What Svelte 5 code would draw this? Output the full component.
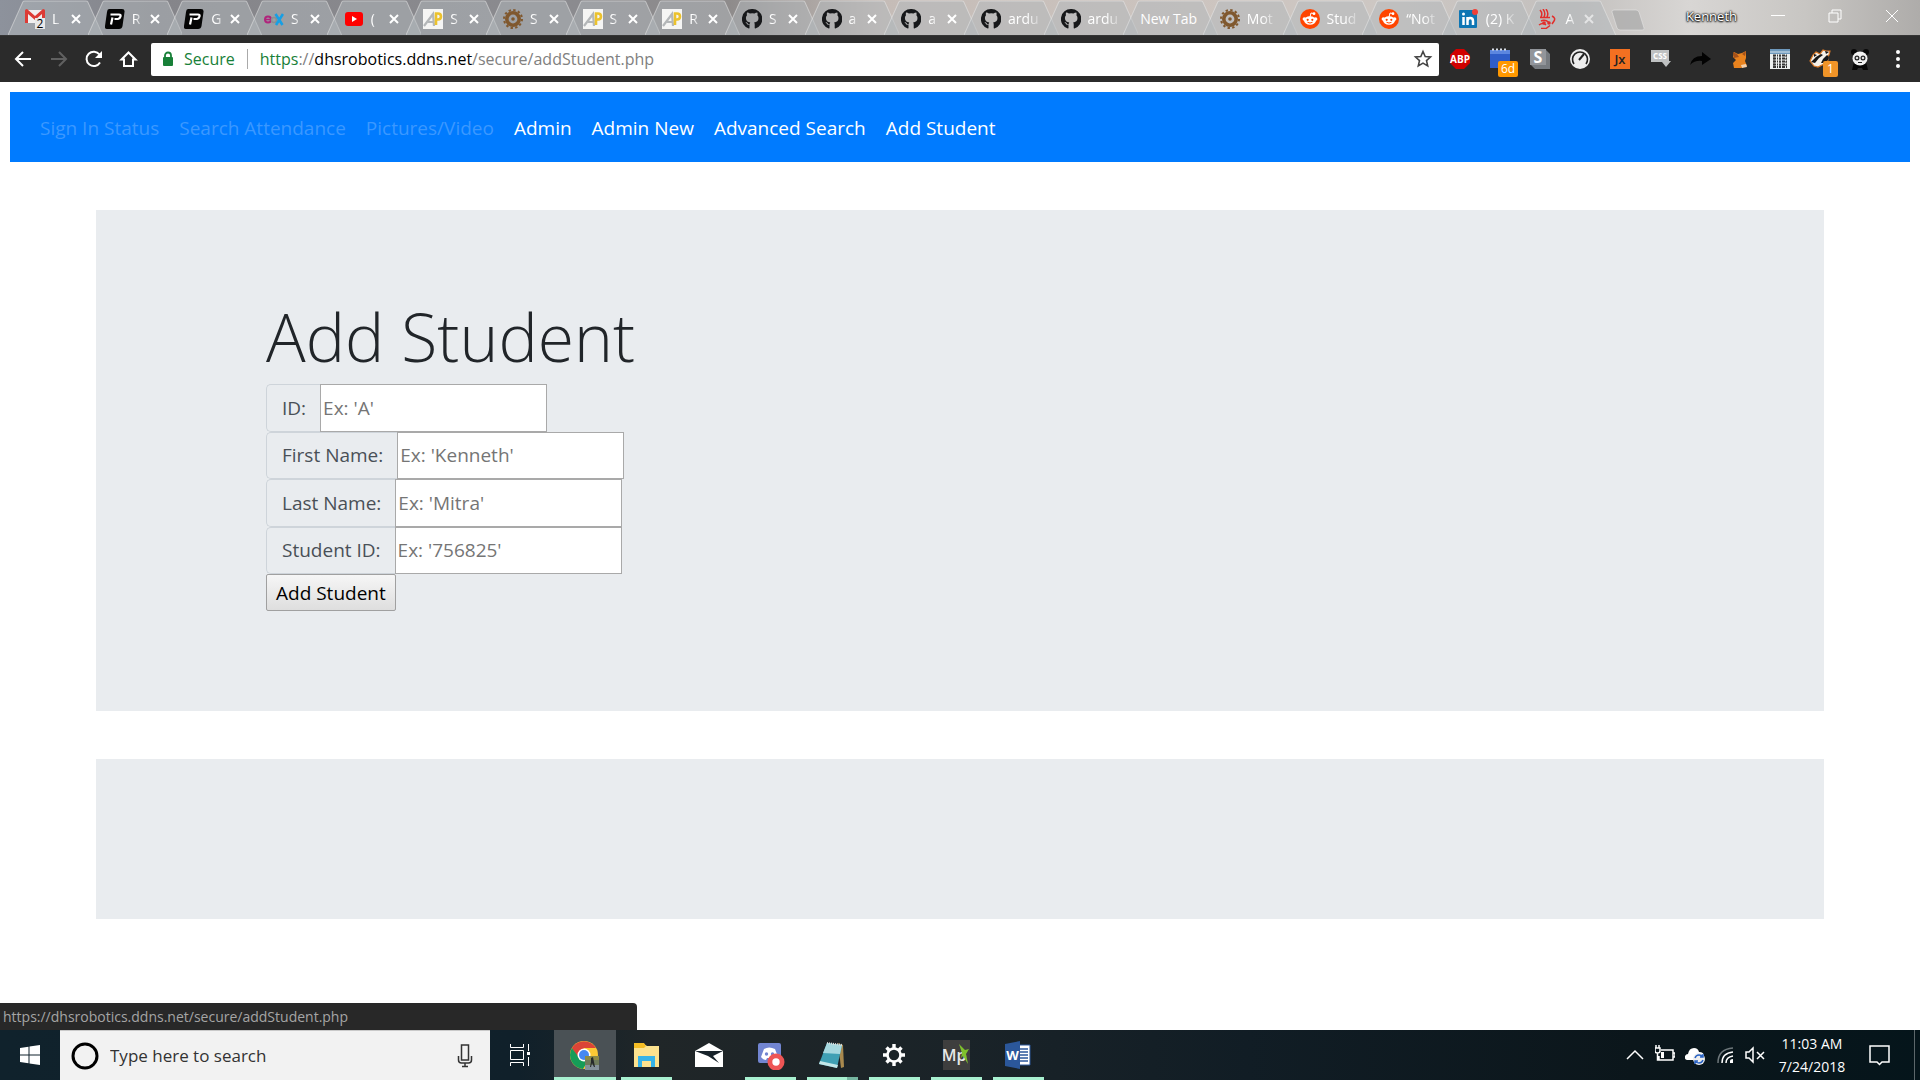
<script>
  const tabs = [
    { icon: 'gmail', title: 'L', close: true },
    { icon: 'p', title: 'R', close: true },
    { icon: 'p', title: 'G', close: true },
    { icon: 'edx', title: 'S', close: true },
    { icon: 'youtube', title: '(', close: true },
    { icon: 'ap', title: 'S', close: true },
    { icon: 'gear', title: 'S', close: true },
    { icon: 'ap', title: 'S', close: true },
    { icon: 'ap', title: 'R', close: true },
    { icon: 'github', title: 'S', close: true },
    { icon: 'github', title: 'a', close: true },
    { icon: 'github', title: 'a', close: true },
    { icon: 'github', title: 'ardu' },
    { icon: 'github', title: 'ardu' },
    { icon: '', title: 'New Tab' },
    { icon: 'gear', title: 'Mot' },
    { icon: 'reddit', title: 'Stud' },
    { icon: 'reddit', title: '“Not' },
    { icon: 'linkedin', title: '(2) K' },
    { icon: 'viking', title: 'A', close: true, current: true }
  ];

  const extensions = ['abp', 'calendar', 's', 'gauge', 'jx', 'css', 'arrow', 'fox', 'qr', 'badger', 'panda'];

  const links = [
    { label: 'Sign In Status', muted: true },
    { label: 'Search Attendance', muted: true },
    { label: 'Pictures/Video', muted: true },
    { label: 'Admin' },
    { label: 'Admin New' },
    { label: 'Advanced Search' },
    { label: 'Add Student' }
  ];

  const fields = [
    { id: 'id', label: 'ID:', hint: "Ex: 'A'" },
    { id: 'first', label: 'First Name:', hint: "Ex: 'Kenneth'" },
    { id: 'last', label: 'Last Name:', hint: "Ex: 'Mitra'" },
    { id: 'student', label: 'Student ID:', hint: "Ex: '756825'" }
  ];

  const apps = ['chrome', 'explorer', 'mail', 'discord', 'notepad', 'settings', 'mp', 'word'];
</script>

{#snippet cog(color)}
  <circle cx="10" cy="10" r="6.2" fill="none" stroke={color} stroke-width="3.6" />
  <circle cx="10" cy="10" r="9" fill="none" stroke={color} stroke-width="2" stroke-dasharray="2.4 2.31" />
  <circle cx="10" cy="10" r="1.8" fill={color} />
{/snippet}

{#snippet favicon(name)}
  <svg class="favicon" viewBox="0 0 20 20" aria-hidden="true">
    {#if name === 'gmail'}
      <path d="M1 1h18v13H1z" fill="#f1efef" />
      <path d="M0 14V1.500Q0 0 2 0l8 7 8-7q2 0 2 1.500V14h-3V5l-7 6-7-6v9z" fill="#dd3b35" />
      <rect x="10" y="9" width="10" height="11" fill="#e8e8e8" />
      <text x="15" y="19" text-anchor="middle" font-size="12" fill="#000">2</text>
    {:else if name === 'p'}
      <path d="M4 0h13q3 0 2.500 3l-2 14q-.5 3-3.500 3H2q-2.500 0-2-3L2 3q.3-3 2-3z" fill="#050505" />
      <path d="M5.500 5.500H14q2 0 1.500 2T13 10H9.500M7.500 8.500 6 15.500" fill="none" stroke="#fff" stroke-width="2.2" />
    {:else if name === 'edx'}
      <circle cx="4" cy="10.500" r="3" fill="none" stroke="#b0247c" stroke-width="2" />
      <path d="M1 10.500h6" stroke="#b0247c" stroke-width="1.500" />
      <circle cx="10" cy="11" r="2.500" fill="none" stroke="#8a8e91" stroke-width="1.500" />
      <path d="m11.500 5 7 11M19 5l-7 11" stroke="#169fe5" stroke-width="2.600" />
    {:else if name === 'youtube'}
      <rect x="1" y="3" width="18" height="14" rx="3" fill="#f00" />
      <path d="m8 7 5 3-5 3z" fill="#fff" />
    {:else if name === 'ap'}
      <path d="M0 0h20v20H0z" fill="#f5f5f4" />
      <path d="m1 17 9-12 1 12M5 13h5" fill="none" stroke="#b4b7b9" stroke-width="2.200" />
      <path d="M13 16V4.500h2q3 0 3 3t-3 3h-2" fill="none" stroke="#ecc22d" stroke-width="2.600" />
    {:else if name === 'gear'}
      {@render cog('#80582e')}
    {:else if name === 'github'}
      <path d="M10 0a10 10 0 0 0-3.200 19.500c.5.1.7-.2.7-.5v-3.400c-.9.4-2 .2-2.500-.7-.5-.9-1-1.200-1.500-1.500 1.300-.3 1.800.5 2.500 1.300.5.700 1.200.5 1.700.2.100-.6.300-1 .6-1.300-2.700-.5-4.400-1.700-4.400-4.600 0-1.100.4-2 1.100-2.800-.3-1-.2-1.900.1-2.700 1 0 1.900.5 2.800 1.100a10 10 0 0 1 4.600 0C13.500 4 14.300 3.500 15.300 3.500c.3.800.4 1.700.1 2.700.7.800 1.100 1.700 1.100 2.800 0 2.900-1.700 4.200-4.400 4.600.4.400.6 1 .6 1.800V19c0 .3.200.6.700.5A10 10 0 0 0 10 0z" fill="#17181a" />
    {:else if name === 'reddit'}
      <circle cx="10" cy="10" r="10" fill="#ff4500" />
      <path d="m10 8 1-4 3 .6" fill="none" stroke="#fff" />
      <circle cx="14" cy="4.700" r="1.400" fill="#fff" />
      <circle cx="4.300" cy="10" r="1.700" fill="#fff" />
      <circle cx="15.700" cy="10" r="1.700" fill="#fff" />
      <ellipse cx="10" cy="11.500" rx="6" ry="4.200" fill="#fff" />
      <circle cx="7.700" cy="10.800" r="1.100" fill="#ff4500" />
      <circle cx="12.300" cy="10.800" r="1.100" fill="#ff4500" />
      <path d="M7.500 13.300q2.500 1.500 5 0" fill="none" stroke="#ff4500" />
    {:else if name === 'linkedin'}
      <rect y="1" width="18" height="18" rx="1" fill="#0e76b4" />
      <path d="M4.500 8v8M8.500 16V8M8.500 12q0-3 2.700-3t2.800 3v4" fill="none" stroke="#fff" stroke-width="2.500" />
      <circle cx="4.500" cy="5" r="1.500" fill="#fff" />
      <circle cx="16" cy="3" r="3" fill="#ef4038" />
    {:else if name === 'viking'}
      <path d="M2 1q3 3 1 7M5 0q3 4 1 8M8 0q3 4 1 8M2 8.500h10M14 7q4 2 2 5l-2 3M3 12q4-2 8 1.500M1 16q4-3 7 0M3 19.500h5l4-3" fill="none" stroke="#e22e2b" stroke-width="1.500" />
      <circle cx="6" cy="14" r="1.800" fill="#e22e2b" />
      <circle cx="11" cy="14" r="1.800" fill="#e22e2b" />
    {/if}
  </svg>
{/snippet}

{#snippet extension(name)}
  <svg class="ext-icon" viewBox="0 0 28 28" aria-hidden="true">
    {#if name === 'abp'}
      <path d="M10 4h8l6 6v8l-6 6h-8l-6-6v-8z" fill="#d00000" />
      <text x="14" y="18" text-anchor="middle" font-size="10" font-weight="700" fill="#fff">ABP</text>
    {:else if name === 'calendar'}
      <path d="M4 5h20v18H4z" fill="#2f5dc8" />
      <path d="M4 5h20v4H4z" fill="#5c86df" />
      <path d="M6 4.500h16" stroke="#d8dee8" stroke-width="2" stroke-dasharray="2 2" />
    {:else if name === 's'}
      <path d="m4 4 16 1 4 4v15H9l-5-5z" fill="#777b80" />
      <path d="M4 4h16v16H4z" fill="#92959a" />
      <text x="12" y="18" text-anchor="middle" font-size="16" font-weight="700" fill="#fff">S</text>
    {:else if name === 'gauge'}
      <circle cx="14" cy="14" r="10" fill="#eee" />
      <path d="M8 19a7.500 7.500 0 1 1 12 0" fill="none" stroke="#222" stroke-width="1.600" />
      <path d="m13 15 5-6" stroke="#222" stroke-width="2" />
    {:else if name === 'jx'}
      <path d="M4 4h20v20H4z" fill="#f37021" />
      <text x="14" y="19" text-anchor="middle" font-size="13" font-weight="600" fill="#222">Jx</text>
    {:else if name === 'css'}
      <path d="M5 5h18v11h2l-5 6-4-5H5z" fill="#bfc1c2" />
      <text x="14" y="14" text-anchor="middle" font-size="8" font-weight="700" fill="#fff">CSS</text>
    {:else if name === 'arrow'}
      <path d="M4 20q2-9 12-9V7l9 7-9 6v-4q-7-1-12 4z" fill="#030303" />
    {:else if name === 'fox'}
      <path d="m8 7 4 2 4-1 4-2v7l-1 3 2 5-6 2H8l-1-5 3-3-3-3z" fill="#e8821e" />
      <path d="m7 7 4 2 2 3-5 1zM20 6l-4 3 3 2z" fill="#a5511a" />
      <path d="m15 20 5-1 1 3-5 1z" fill="#f4cfab" />
    {:else if name === 'qr'}
      <path d="M4 4h20v20H4z" fill="#ecefef" />
      <path d="M4 4h20v5H4z" fill="#6e99bd" />
      <path d="M4 7h20" stroke="#d8e5ed" />
      <path d="M7 10.500h14M7 13.500h14M7 16.500h14M7 19.500h14M7 22h14" stroke="#333" stroke-width="2" stroke-dasharray="3 1 1 1 2 1" />
      <path d="M8 11v11M14 10v12M20 10v12" stroke="#444" stroke-dasharray="2 1" />
    {:else if name === 'badger'}
      <path d="m4 16 3-6 3-3 4 2 3-4 3 1h4l-1 4-2 2 1 3-4 4-6 3-4-1z" fill="#f4f0e9" stroke="#d97826" stroke-width="1.200" />
      <path d="m5 17 5-5 5-3 2 1-4 3-4 5zM15 18l2-4 4-4 1 1v4l-4 3zM8 9l3 1-3 2zM19 6l4 1-3 2z" fill="#161616" />
    {:else if name === 'panda'}
      <path d="M8 17h12l2 8h-5l-1-2h-4l-1 2H6z" fill="#080808" />
      <circle cx="8" cy="7" r="3" fill="#080808" />
      <circle cx="20" cy="7" r="3" fill="#080808" />
      <ellipse cx="14" cy="13.500" rx="7.500" ry="7" fill="#f3f3f3" />
      <circle cx="11" cy="13" r="1.900" fill="#ddd" stroke="#222" stroke-width="1.200" />
      <circle cx="17" cy="13" r="1.900" fill="#ddd" stroke="#222" stroke-width="1.200" />
      <path d="M12 17.500h4" stroke="#222" />
    {/if}
  </svg>
{/snippet}

{#snippet appIcon(name)}
  <svg class="app-icon" viewBox="0 0 30 30" aria-hidden="true">
    {#if name === 'chrome'}
      <circle cx="14" cy="15" r="14" fill="#fcc934" />
      <path d="M1.900 8A14 14 0 0 1 26 8H14l-6 10z" fill="#dc4437" />
      <path d="M1.900 8A14 14 0 0 0 13 29l6-10-9 0z" fill="#169c58" />
      <circle cx="14" cy="15" r="6.500" fill="#fff" />
      <circle cx="14" cy="15" r="5" fill="#4688f1" />
      <path d="M15 16h14v14H15z" fill="#6f7b5c" />
      <path d="M15 16h14v4H15z" fill="#8d8a45" />
      <path d="M15 25h14v5H15z" fill="#84919a" />
      <path d="m21 18 2-1 1 5 1 5h-1l-2-4-1 4h-1l1-5z" fill="#25282b" />
    {:else if name === 'explorer'}
      <path d="M2 4h10l3 2h12v21H2z" fill="#fce28e" />
      <path d="M2 3h10l2 3-2 2H2z" fill="#f5bd24" />
      <path d="M6 27V16h17v11h-4v-6h-9v6z" fill="#36b3e8" />
    {:else if name === 'mail'}
      <path d="M1 11 15 3l14 8v16H1z" fill="#fff" />
      <path d="M1 11h28L19 16l6 7-11-7z" fill="#17222a" />
    {:else if name === 'discord'}
      <path d="M4 3h19q2 0 2 2v20l-4-2H4q-2 0-2-2V5q0-2 2-2z" fill="#7285d1" />
      <path d="M8 9q5-3 11 0l3 8q-2 3-5 3l-1-2h-5l-1 2q-3 0-5-3z" fill="#fff" />
      <circle cx="10.500" cy="14" r="1.700" fill="#7285d1" />
      <circle cx="16.500" cy="14" r="1.700" fill="#7285d1" />
      <circle cx="20" cy="22" r="8.500" fill="#ee5555" />
      <circle cx="20" cy="22" r="3.700" fill="#fff" />
    {:else if name === 'notepad'}
      <path d="M20 3 25 5l1 22-3 1z" fill="#a8894e" />
      <path d="m9 3 15 2-5 23L1 24z" fill="#3fa0b4" />
      <path d="m9 3 15 2-2 9-17-1z" fill="#a6d8df" />
      <path d="m1 24 18 4 1-3L2 21z" fill="#c3e7e9" />
      <path d="m9 3 15 2" stroke="#ddd" stroke-width="2" stroke-dasharray="1 1" />
    {:else if name === 'settings'}
      <circle cx="14" cy="15" r="6.500" fill="none" stroke="#fff" stroke-width="2.600" />
      <path d="M14 4v4M14 22v4M3 15h4M21 15h4M6.500 7.500l2.500 2.500M19 20l2.500 2.500M21.500 7.500 19 10M6.500 22.500 9 20" stroke="#fff" stroke-width="3.400" />
    {:else if name === 'mp'}
      <path d="M1 0h27v30H1z" fill="#3e3e3e" />
      <text x="12" y="21" text-anchor="middle" font-size="16" font-weight="600" fill="#e8e8e8">Mp</text>
      <path d="m17 4 6 6 4-1-3 5 2 10-5-8-2 2 1-5z" fill="#7fc12d" />
    {:else if name === 'word'}
      <path d="M13 5h13v20H13z" fill="#fff" stroke="#2b579a" />
      <path d="M16 9h8M16 12h8M16 15h8M16 18h8M16 21h8" stroke="#2b579a" stroke-width="1.500" />
      <path d="m1 4 15-3v28L1 26z" fill="#2b579a" />
      <text x="8.500" y="20" text-anchor="middle" font-size="13" font-weight="700" fill="#fff">W</text>
    {/if}
  </svg>
{/snippet}

<div class="screen">
  <header>
    <div class="titlebar">
      <div class="tabs" role="tablist">
        {#each tabs as tab}
          <div class="tab" class:current={tab.current}>
            <svg class="tab-shape" viewBox="0 0 96 35" preserveAspectRatio="none" aria-hidden="true">
              <path d="M0 35 15 2Q15.500 1 17 1H79Q80.500 1 81 2L96 35" />
            </svg>
            <button class="tab-label" role="tab" aria-selected={!!tab.current}>
              {#if tab.icon}{@render favicon(tab.icon)}{/if}
              <span class="tab-title" class:short={tab.close} class:full={!tab.icon}>{tab.title}</span>
            </button>
            {#if tab.close}
              <button class="tab-close" aria-label="Close tab">
                <svg viewBox="0 0 10 10"><path d="m1 1 8 8M9 1 1 9" /></svg>
              </button>
            {/if}
          </div>
        {/each}
      </div>
      <button class="new-tab" aria-label="Open new tab">
        <svg viewBox="0 0 42 22"><path d="M3 1h22q2 0 3 2l5 16q1 2-2 2H9q-2 0-3-2L1 3q-.5-2 2-2z" /></svg>
      </button>
      <div class="window-controls">
        <span class="profile">Kenneth</span>
        <button aria-label="Minimize"><svg viewBox="0 0 14 14"><path d="M0 6.500h14" /></svg></button>
        <button aria-label="Restore"><svg viewBox="0 0 14 14"><path d="M1 4h9v9H1zM4 4V1h9v9h-3" /></svg></button>
        <button aria-label="Close"><svg viewBox="0 0 14 14"><path d="m1 1 12 12M13 1 1 13" /></svg></button>
      </div>
    </div>

    <div class="toolbar">
      <button class="nav-btn" aria-label="Back">
        <svg viewBox="0 0 20 20"><path d="M17 10H2M9 3l-7 7 7 7" /></svg>
      </button>
      <button class="nav-btn dim" aria-label="Forward">
        <svg viewBox="0 0 20 20"><path d="M2 10h15M10 3l7 7-7 7" /></svg>
      </button>
      <button class="nav-btn" aria-label="Reload">
        <svg viewBox="0 0 20 20"><path d="M16 13.500A7.200 7.200 0 1 1 15.500 5.500" /><path class="solid" d="M18 2v7h-7z" /></svg>
      </button>
      <button class="nav-btn" aria-label="Home">
        <svg viewBox="0 0 20 20"><path d="m2.500 10.500 7-7 7 7H14V17H5v-6.500z" /></svg>
      </button>
      <div class="omnibox">
        <svg class="lock" viewBox="0 0 12 16" aria-hidden="true">
          <path d="M3 7V4.500a3 3 0 0 1 6 0V7" fill="none" stroke="#188038" stroke-width="1.800" />
          <rect x="1" y="6" width="10" height="9" rx="1" fill="#188038" />
        </svg>
        <span class="secure">Secure</span>
        <div class="url" role="textbox" tabindex="0" aria-label="Address"><span class="scheme">https</span>://<span class="host">dhsrobotics.ddns.net</span>/secure/addStudent.php</div>
        <button class="star" aria-label="Bookmark this page">
          <svg viewBox="0 0 20 20"><path d="m10 2.500 2.200 5 5.300.5-4 3.600 1.200 5.300-4.700-2.800-4.700 2.800 1.200-5.300-4-3.600 5.300-.5z" /></svg>
        </button>
      </div>
      <div class="extensions">
        {#each extensions as name}
          <button class="extension" aria-label={name}>
            {@render extension(name)}
            {#if name === 'calendar'}<span class="badge">6d</span>{/if}
            {#if name === 'badger'}<span class="badge one">1</span>{/if}
          </button>
        {/each}
      </div>
      <button class="menu" aria-label="Menu">
        <svg viewBox="0 0 4 18"><circle cx="2" cy="2" r="2" /><circle cx="2" cy="9" r="2" /><circle cx="2" cy="16" r="2" /></svg>
      </button>
    </div>
  </header>

  <main>
    <nav>
      {#each links as link}
        <a href="#top" class:muted={link.muted}>{link.label}</a>
      {/each}
    </nav>

    <section class="panel">
      <h1>Add Student</h1>
      <form onsubmit={(e) => e.preventDefault()}>
        <div class="fields">
          {#each fields as field}
            <div class="group">
              <label for={field.id}>{field.label}</label>
              <input id={field.id} type="text" placeholder={field.hint} />
            </div>
          {/each}
        </div>
        <button class="submit">Add Student</button>
      </form>
    </section>

    <section class="panel empty"></section>

    <div class="status">https://dhsrobotics.ddns.net/secure/addStudent.php</div>
  </main>

  <footer>
    <button class="start" aria-label="Start">
      <svg viewBox="0 0 20 20"><path d="M0 3l8.500-1.200v7.700H0zM9.500 1.600 20 0v9.500H9.500zM0 10.500h8.500v7.700L0 17zM9.500 10.500H20V20L9.500 18.400z" /></svg>
    </button>
    <div class="search">
      <svg class="cortana" viewBox="0 0 28 28" aria-hidden="true"><circle cx="14" cy="14" r="12" /></svg>
      <input type="text" placeholder="Type here to search" aria-label="Type here to search" />
      <svg class="mic" viewBox="0 0 16 24" aria-hidden="true"><rect x="4.500" y="1" width="7" height="15" /><path d="M1.500 12v4q0 3 3 3h7q3 0 3-3v-4M8 19v4M5 22.500h6" /></svg>
    </div>
    <button class="task-view" aria-label="Task view">
      <svg viewBox="0 0 22 22"><path d="M1.500 0v3.500h13V0M1.500 6.500h13v9h-13zM1.500 22v-3.500h13V22M19.500 0v7M19.500 13v9" /><path class="solid" d="M18 8h3v3h-3z" /></svg>
    </button>
    <div class="apps">
      {#each apps as name}
        <button class="app {name}" aria-label={name}>{@render appIcon(name)}</button>
      {/each}
    </div>
    <div class="tray">
      <svg viewBox="0 0 20 20" aria-hidden="true"><path d="m2 14 8-8 8 8" /></svg>
      <svg viewBox="0 0 20 20" aria-hidden="true"><path d="M6 5h12v10H4v-4M18 8h2v4h-2M0 3h5v3q0 2-2.500 2T0 6zM1 0v3M4 0v3M2.500 8v7H5" /><path class="solid" d="M6 7h3v6H6z" /></svg>
      <svg viewBox="0 0 20 20" aria-hidden="true">
        <path class="solid" d="M2 15q-3-1-2-4 1-2 3-2 1-6 6-6 4 0 5 4 5 0 5 4v4z" />
        <circle cx="14" cy="14" r="6" fill="#eee" stroke="none" />
        <path d="M10 13q1-3 4-3t4 2M18 15q-1 3-4 3t-4-2M18 9v3h-3M10 19v-3h3" stroke="#2a63c4" />
      </svg>
      <svg viewBox="0 0 20 20" aria-hidden="true">
        <path d="M3 18Q3 4 18 3" stroke="#6e777b" /><path d="M7 18Q7 8 18 7M11 18q0-6 7-7" /><path class="solid" d="M15 18v-2q0-2 3-2v4z" />
      </svg>
      <svg viewBox="0 0 20 20" aria-hidden="true"><path d="M1 7h3l4-4v14l-4-4H1zM12 7l7 7M19 7l-7 7" /></svg>
    </div>
    <time><span>11:03 AM</span><span>7/24/2018</span></time>
    <button class="notice" aria-label="Notifications">
      <svg viewBox="0 0 22 22"><path d="M1 2h19v16h-7l-2.500 2.500L8 18H1z" /></svg>
    </button>
  </footer>
</div>

<style>
  :global(body) {
    margin: 0;
    background: #fff;
  }
  .screen,
  .screen :global(*) {
    box-sizing: border-box;
  }
  .screen {
    display: flex;
    flex-direction: column;
    min-height: 100vh;
    font-family: 'Open Sans', 'Noto Sans', sans-serif;
    font-size: 19px;
    color: #212529;
  }
  button {
    padding: 0;
    border: 0;
    background: none;
    font: inherit;
    color: inherit;
    display: flex;
    align-items: center;
    justify-content: center;
    flex: none;
  }
  svg {
    display: block;
    flex: none;
  }

  .titlebar {
    display: flex;
    height: 35px;
    padding-left: 8px;
    background: linear-gradient(90deg, #8d929c 0, #85858a 8%, #8b8b8f 30%, #8e8b8b 38%, #c5bcb7 46%, #cdc5c0 64%, #cdc7c3 72%, #c3c0be 82%, #d8d6d4 88%, #c8c6c3 94%, #aeacaa 100%);
  }
  .tabs {
    display: flex;
    flex: 1;
    min-width: 0;
  }
  .tab {
    position: relative;
    display: flex;
    align-items: center;
    flex: 1;
    min-width: 0;
    padding: 2px 2px 0 17px;
    color: #fff;
    font-size: 14px;
  }
  .tab-shape {
    position: absolute;
    left: 0;
    top: 0;
    width: calc(100% + 15px);
    height: 35px;
    fill: rgba(178, 184, 187, 0.5);
    stroke: rgba(235, 235, 235, 0.5);
  }
  .tab-shape path {
    vector-effect: non-scaling-stroke;
  }
  .tab-label {
    position: relative;
    flex: 1;
    min-width: 0;
    justify-content: flex-start;
    gap: 7px;
  }
  .favicon {
    width: 20px;
    height: 20px;
  }
  .tab-title {
    white-space: nowrap;
    line-height: 20px;
    mask-image: linear-gradient(90deg, #000 60%, rgba(0, 0, 0, 0.3));
  }
  .tab-title.short {
    mask-image: linear-gradient(90deg, #000 40%, rgba(0, 0, 0, 0.5));
  }
  .tab-title.full {
    mask-image: none;
  }
  .tab-close {
    position: relative;
    width: 20px;
    height: 20px;
  }
  .tab-close svg {
    width: 10px;
    height: 10px;
    fill: none;
    stroke: #fff;
    stroke-width: 2;
  }
  .current .tab-close {
    opacity: 0.6;
  }
  .new-tab {
    width: 42px;
    padding-bottom: 4px;
    margin-left: 10px;
    align-items: flex-end;
  }
  .new-tab svg {
    width: 42px;
    height: 22px;
    fill: rgba(170, 170, 170, 0.7);
    stroke: rgba(235, 235, 235, 0.5);
  }
  .window-controls {
    display: flex;
    flex: none;
    width: 267px;
    align-items: center;
    justify-content: flex-end;
    padding-bottom: 4px;
    color: #fff;
    font-size: 13px;
  }
  .profile {
    margin-right: 12px;
    text-shadow: 0 0 2px #000, 0 0 2px #000, 0 1px 2px #000;
  }
  .window-controls button {
    width: 57px;
    height: 30px;
  }
  .window-controls svg {
    width: 14px;
    height: 14px;
    fill: none;
    stroke: #fff;
  }

  .toolbar {
    display: flex;
    align-items: center;
    height: 47px;
    padding: 0 7px 0 6px;
    background: #2b2b2b;
    border-top: 1px solid #353535;
  }
  .nav-btn {
    width: 35px;
    height: 33px;
  }
  .nav-btn svg {
    width: 20px;
    height: 20px;
    fill: none;
    stroke: #fff;
    stroke-width: 2;
  }
  .nav-btn .solid {
    fill: #fff;
    stroke: none;
  }
  .nav-btn.dim {
    opacity: 0.25;
  }
  .omnibox {
    display: flex;
    align-items: center;
    flex: 1;
    height: 33px;
    margin-left: 5px;
    padding: 0 6px 0 11px;
    background: #fff;
    border-radius: 2px;
    font-size: 16px;
    color: #808080;
    white-space: nowrap;
  }
  .lock {
    width: 12px;
    height: 16px;
  }
  .secure {
    margin-left: 10px;
    padding-right: 12px;
    border-right: 1px solid #aaa;
    line-height: 20px;
    color: #188038;
  }
  .url {
    flex: 1;
    padding-left: 12px;
  }
  .scheme {
    color: #188038;
  }
  .host {
    color: #000;
  }
  .star svg {
    width: 20px;
    height: 20px;
    fill: none;
    stroke: #444;
    stroke-width: 1.6;
  }
  .extensions {
    display: flex;
    margin: 0 3px 0 1px;
  }
  .extension {
    position: relative;
    width: 40px;
    height: 36px;
  }
  .ext-icon {
    width: 28px;
    height: 28px;
  }
  .badge {
    position: absolute;
    right: 2px;
    bottom: 0;
    width: 20px;
    height: 16px;
    border-radius: 2px;
    background: #ff9800;
    color: #fff;
    font-size: 12px;
    line-height: 16px;
  }
  .badge.one {
    width: 15px;
    background: #f09428;
  }
  .menu {
    width: 30px;
    height: 33px;
  }
  .menu svg {
    width: 4px;
    height: 18px;
    fill: #fff;
  }

  main {
    position: relative;
    flex: 1;
    padding-top: 10px;
  }
  nav {
    display: flex;
    flex-wrap: wrap;
    margin: 0 10px;
    padding: 11px 20px 9px;
    background: #007bff;
  }
  nav a {
    padding: 10px;
    line-height: 30px;
    color: #fff;
    text-decoration: none;
  }
  nav a.muted {
    color: #3b98ff;
  }
  .panel {
    margin: 48px 5%;
    padding: 84px 170px 100px;
    background: #e9ecef;
  }
  .panel.empty {
    padding: 80px;
    margin-bottom: 0;
  }
  h1 {
    margin: 0 0 6px;
    font-size: 66px;
    font-weight: 300;
    line-height: 84px;
  }
  .fields {
    display: grid;
    grid-template-rows: repeat(4, 1fr);
    height: 190px;
  }
  .group {
    display: flex;
  }
  label {
    display: flex;
    align-items: center;
    padding: 0 14px 0 15px;
    border: 1px solid #ced4da;
    border-right: 0;
    border-radius: 5px 0 0 5px;
    color: #495057;
  }
  .group input {
    width: 227px;
    padding: 1px 2px;
    border: 1px solid #a9a9a9;
    background: #fff;
    font: inherit;
  }
  .group input::placeholder {
    color: #757575;
    opacity: 1;
  }
  .submit {
    height: 37px;
    padding: 0 9px;
    border: 1px solid #a0a0a0;
    border-radius: 2px;
    background: linear-gradient(#f6f6f6, #dedede);
    color: #000;
  }
  .status {
    position: absolute;
    left: 0;
    bottom: 0;
    width: 637px;
    height: 27px;
    padding-left: 3px;
    border-top-right-radius: 4px;
    background: #282828;
    color: #a5a5a5;
    font-size: 14px;
    line-height: 27px;
  }

  footer {
    display: flex;
    height: 50px;
    padding-right: 5px;
    background: linear-gradient(90deg, #10222c 0, #10202a 27%, #202628 34%, #1a2328 50%, #111d25 65%, #0b161b 85%, #05151b 100%);
    color: #fff;
  }
  .start {
    width: 60px;
  }
  .start svg {
    width: 20px;
    height: 20px;
    fill: #fff;
  }
  .search {
    display: flex;
    align-items: center;
    width: 430px;
    padding: 0 17px 0 11px;
    background: #f2f2f2;
    border-top: 1px solid #c9c9c9;
  }
  .cortana {
    width: 28px;
    height: 28px;
    fill: none;
    stroke: #000;
    stroke-width: 3;
  }
  .search input {
    flex: 1;
    min-width: 0;
    padding: 0 0 0 11px;
    border: 0;
    background: none;
    font: inherit;
    font-size: 17px;
  }
  .search input::placeholder {
    color: #333;
    opacity: 1;
  }
  .mic {
    width: 16px;
    height: 24px;
    fill: none;
    stroke: #333;
    stroke-width: 1.5;
  }
  .task-view {
    width: 64px;
    padding-right: 4px;
  }
  .task-view svg {
    width: 22px;
    height: 22px;
    fill: none;
    stroke: #fff;
  }
  .task-view .solid {
    fill: #fff;
    stroke: none;
  }
  .apps {
    display: flex;
    flex: 1;
  }
  .app {
    position: relative;
    width: 62px;
  }
  .app-icon {
    width: 30px;
    height: 30px;
  }
  .app::after {
    content: '';
    position: absolute;
    left: 5px;
    right: 6px;
    bottom: 0;
    height: 3px;
    background: #a8f0d0;
  }
  .app.chrome {
    background: #4a5155;
  }
  .app.chrome::after {
    left: 0;
    right: 0;
  }
  .app.mail::after {
    display: none;
  }
  .app.notepad::after {
    background: linear-gradient(90deg, #a8f0d0 40px, #75b5a0 40px);
  }
  .tray {
    display: flex;
    align-items: center;
    gap: 10px;
    margin-right: 11px;
  }
  .tray svg {
    width: 20px;
    height: 20px;
    fill: none;
    stroke: #fff;
    stroke-width: 1.5;
  }
  .tray .solid {
    fill: #fff;
    stroke: none;
  }
  time {
    display: flex;
    flex-direction: column;
    align-items: center;
    justify-content: center;
    width: 72px;
    font-size: 14px;
    line-height: 23px;
  }
  .notice {
    width: 67px;
    padding-right: 3px;
    border-right: 1px solid #5c676b;
  }
  .notice svg {
    width: 22px;
    height: 22px;
    fill: none;
    stroke: #fff;
    stroke-width: 1.5;
  }
</style>
